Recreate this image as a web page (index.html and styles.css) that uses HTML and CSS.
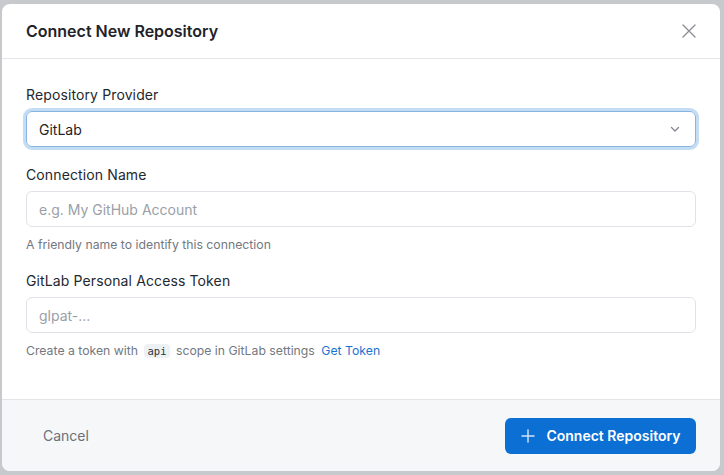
FILE: index.html
```html
<!DOCTYPE html>
<html>
<head>
<meta charset="utf-8">
<link rel="stylesheet" href="styles.css">
</head>
<body>
<div class="modal">
  <div class="modal-header">
    <h2 class="modal-title">Connect New Repository</h2>
    <button class="close-btn" aria-label="Close">
      <svg width="16" height="16" viewBox="0 0 16 16" fill="none" stroke="currentColor" stroke-width="1.4" stroke-linecap="round"><path d="M2 2L14 14M14 2L2 14"/></svg>
    </button>
  </div>
  <div class="modal-body">
    <div class="field">
      <label class="label">Repository Provider</label>
      <div class="select focused">
        <span>GitLab</span>
        <svg class="chev" width="12" height="12" viewBox="0 0 12 12" fill="none" stroke="currentColor" stroke-width="1.3" stroke-linecap="round" stroke-linejoin="round"><path d="M2.5 4.5L6 8L9.5 4.5"/></svg>
      </div>
    </div>
    <div class="field field-2">
      <label class="label">Connection Name</label>
      <div class="input"><span class="placeholder">e.g. My GitHub Account</span></div>
      <p class="help">A friendly name to identify this connection</p>
    </div>
    <div class="field field-3">
      <label class="label">GitLab Personal Access Token</label>
      <div class="input"><span class="placeholder">glpat-...</span></div>
      <p class="help">Create a token with <code class="code">api</code> scope in GitLab settings <a class="link" href="#">Get Token</a></p>
    </div>
  </div>
  <div class="modal-footer">
    <button class="btn-cancel">Cancel</button>
    <button class="btn-primary">
      <svg width="16" height="16" viewBox="0 0 16 16" fill="none" stroke="currentColor" stroke-width="1.5" stroke-linecap="round"><path d="M8 2V14M2 8H14"/></svg>
      <span>Connect Repository</span>
    </button>
  </div>
</div>
</body>
</html>
```
FILE: styles.css
```css
* { box-sizing: border-box; }
html, body { margin: 0; padding: 0; }
body {
  background: #c7c9cc;
  font-family: Inter, "Noto Sans", sans-serif;
  width: 724px;
  height: 475px;
  overflow: hidden;
}
.modal {
  margin: 4px 0 0 2px;
  width: 718px;
  height: 467px;
  background: #fff;
  border-radius: 8px;
  overflow: hidden;
  display: flex;
  flex-direction: column;
}
.modal-header {
  display: flex;
  align-items: center;
  justify-content: space-between;
  padding: 15px 23px 15px 24px;
  border-bottom: 1px solid #e3e5e8;
}
.modal-title {
  margin: 0;
  font-size: 16px;
  line-height: 24px;
  font-weight: 600;
  color: #1f2328;
}
.close-btn {
  border: 0;
  background: none;
  padding: 0;
  width: 16px;
  height: 16px;
  color: #8c9096;
  display: flex;
}
.modal-body {
  flex: 1;
  padding: 26px 24px 0 24px;
  display: flex;
  flex-direction: column;
}
.field { display: flex; flex-direction: column; }
.field-2 { margin-top: 18px; }
.field-3 { margin-top: 18px; }
.label {
  font-size: 14px;
  line-height: 20px;
  font-weight: 400;
  letter-spacing: 0.12px;
  color: #24282e;
  margin-bottom: 6px;
}
.select, .input {
  height: 36px;
  border: 1px solid #dfe2e6;
  border-radius: 6px;
  display: flex;
  align-items: center;
  justify-content: space-between;
  padding: 0 14px 0 12px;
  font-size: 14px;
  color: #1f2328;
}
.select.focused {
  border-color: #86b4e3;
  box-shadow: 0 0 0 3px #c5ddf3;
}
.chev { color: #80858c; }
.placeholder { color: #9aa0a7; }
.help {
  margin: 10px 0 0 0;
  font-size: 12.25px;
  line-height: 16px;
  color: #737880;
}
.code {
  font-family: "DejaVu Sans Mono", monospace;
  font-size: 10.5px;
  background: #eef1f4;
  color: #30353b;
  padding: 1px 4px;
  border-radius: 4px;
  margin: 0 2px;
}
.link {
  color: #1a73d0;
  text-decoration: none;
  margin-left: 3px;
}
.modal-footer {
  height: 72px;
  background: #f6f7f9;
  border-top: 1px solid #e3e5e8;
  display: flex;
  align-items: center;
  justify-content: space-between;
  padding: 0 24px;
}
.btn-cancel {
  border: 0;
  background: none;
  font-family: inherit;
  font-size: 14px;
  color: #6b7079;
  padding: 8px 17px;
}
.btn-primary {
  height: 36px;
  width: 191px;
  border: 0;
  border-radius: 6px;
  background: #0b6fd4;
  color: #fff;
  font-family: inherit;
  font-size: 14px;
  font-weight: 600;
  white-space: nowrap;
  display: flex;
  align-items: center;
  justify-content: center;
  gap: 10px;
  padding: 0;
}
.btn-primary svg { color: #cfe3f8; }
```
